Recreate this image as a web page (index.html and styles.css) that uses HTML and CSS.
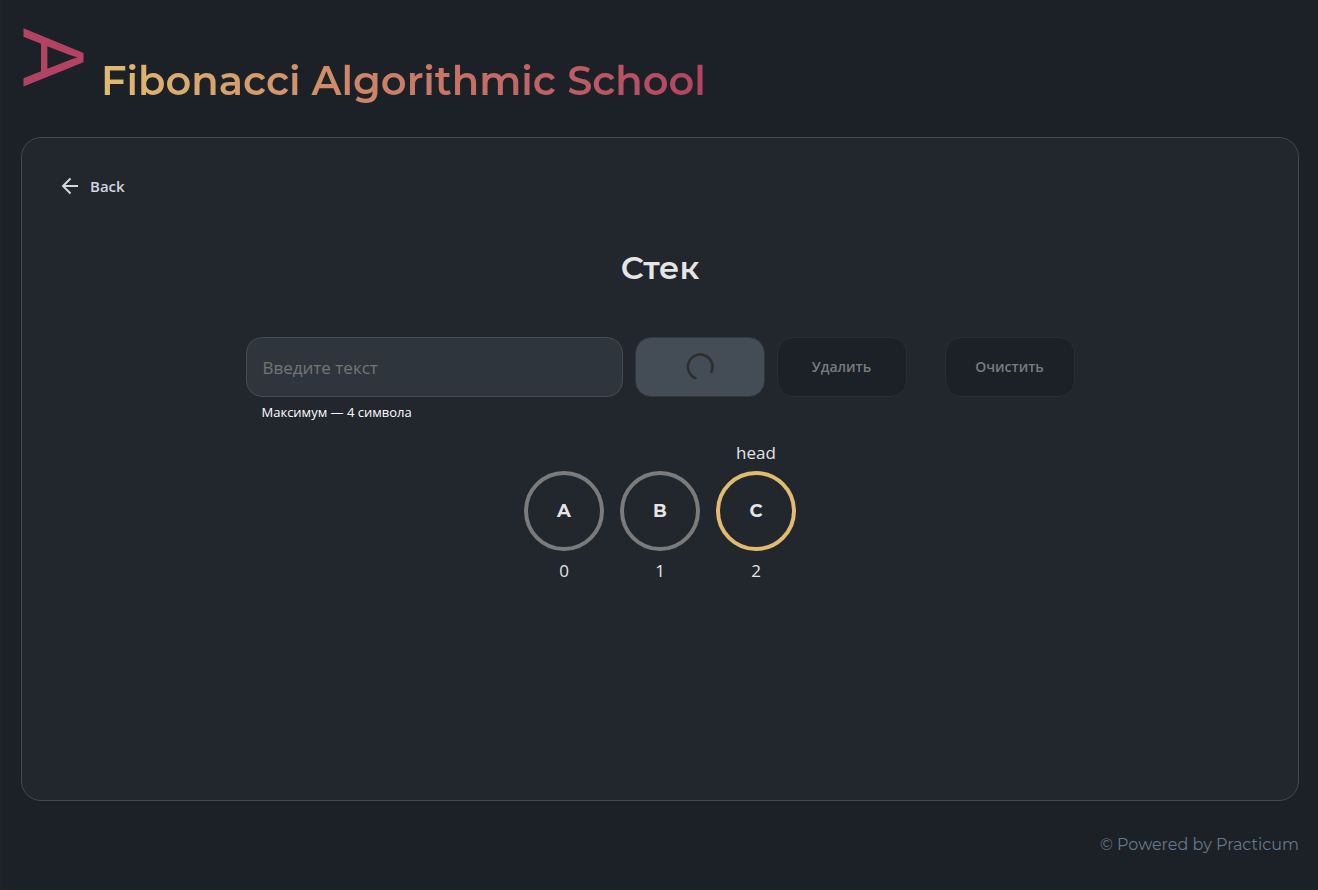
FILE: index.html
```html
<!DOCTYPE html>
<html lang="ru">
<head>
<meta charset="utf-8">
<meta name="viewport" content="width=device-width, initial-scale=1">
<title>Стек</title>
<link rel="stylesheet" href="styles.css">
</head>
<body class="page">
  <header class="header">
    <span class="logo" aria-hidden="true">A</span>
    <h1 class="title">Fibonacci Algorithmic School</h1>
  </header>
  <main class="card">
    <a class="back" href="#">
      <svg class="back-icon" viewBox="0 0 18 18" width="18" height="18" fill="none" stroke="currentColor" stroke-width="2" aria-hidden="true"><path d="M17 9H2M9.500 1.500L2 9l7.500 7.500"/></svg>
      <span>Back</span>
    </a>
    <h2 class="heading">Стек</h2>
    <form class="form">
      <div class="field">
        <input class="input" type="text" maxlength="4" placeholder="Введите текст" aria-label="Введите текст" aria-describedby="hint">
        <span class="hint" id="hint">Максимум — 4 символа</span>
      </div>
      <button class="button button-loading" type="button" aria-label="Добавить" disabled>
        <svg viewBox="0 0 28 28" width="28" height="28" fill="none" stroke="#2d2d2d" stroke-width="2.500" stroke-linecap="round" aria-hidden="true"><path d="M9.500 25.200A12.300 12.300 0 1 1 25.400 19"/></svg>
      </button>
      <button class="button" type="button" disabled>Удалить</button>
      <button class="button button-clear" type="button" disabled>Очистить</button>
    </form>
    <ul class="stack">
      <li class="node"><span class="head"></span><span class="circle">A</span><span class="index">0</span></li>
      <li class="node"><span class="head"></span><span class="circle">B</span><span class="index">1</span></li>
      <li class="node"><span class="head">head</span><span class="circle circle-changing">C</span><span class="index">2</span></li>
    </ul>
  </main>
  <footer class="footer">© Powered by Practicum</footer>
</body>
</html>
```
FILE: styles.css
```css
*, *::before, *::after { box-sizing: border-box; }

.page {
  display: flex;
  flex-direction: column;
  min-height: 100vh;
  margin: 0;
  padding: 0 19px 0 20px;
  border-left: 1px solid #222;
  border-bottom: 1px solid #222;
  background: #1c2027;
  color: #e5e5e5;
  font-family: "Segoe UI", "Open Sans", sans-serif;
}

.header {
  display: flex;
  align-items: flex-start;
  gap: 16px;
  height: 137px;
  padding-top: 28px;
}

.logo {
  width: 64px;
  color: #b24362;
  font: 400 88px/64px "Liberation Sans", sans-serif;
  writing-mode: vertical-rl;
  text-orientation: sideways;
}

.title {
  margin: 28px 0 0;
  background: linear-gradient(90deg, #e0bb70, #d08b69 38%, #b24362);
  background-clip: text;
  color: transparent;
  font: 600 40px/50px Montserrat, Inter, sans-serif;
}

.card {
  display: flex;
  flex: 1;
  flex-direction: column;
  align-items: center;
  padding: 36px 39px;
  border: 1px solid #444851;
  border-radius: 20px;
  background: #22262d;
}

.back {
  display: flex;
  align-items: center;
  align-self: flex-start;
  gap: 11px;
  color: #cfd8e2;
  font-size: 15px;
  font-weight: 600;
  line-height: 24px;
  text-decoration: none;
}

.back-icon { display: block; }

.heading {
  margin: 50px 0 0;
  font: 600 32px/40px Montserrat, Inter, sans-serif;
}

.form {
  display: flex;
  align-items: flex-start;
  gap: 12px;
  margin: 49px 0 0;
}

.field {
  display: flex;
  flex-direction: column;
  gap: 6px;
  width: 377px;
}

.input {
  width: 100%;
  height: 60px;
  padding: 0 16px;
  border: 1px solid #444c56;
  border-radius: 16px;
  background: #2f353d;
  color: #e5e5e5;
  font: 400 17px/24px "Segoe UI", "Open Sans", sans-serif;
}

.input::placeholder { color: #757575; opacity: 1; }

.hint {
  padding-left: 16px;
  color: #fff;
  font-size: 13px;
  line-height: 18px;
}

.button {
  display: flex;
  align-items: center;
  justify-content: center;
  width: 130px;
  height: 60px;
  padding: 0;
  border: 1px solid #292d37;
  border-radius: 16px;
  background: #1c2027;
  color: #7b7b7b;
  font: 600 14px/24px "Segoe UI", "Open Sans", sans-serif;
}

.button-loading {
  border-color: #2f3740;
  background: #444c56;
}

.button-clear { margin-left: 26px; }

.stack {
  display: flex;
  gap: 16px;
  margin: 20px 0 0;
  padding: 0;
  list-style: none;
}

.node {
  display: flex;
  flex-direction: column;
  align-items: center;
  width: 80px;
  font-size: 17px;
  line-height: 24px;
}

.head { height: 30px; }

.circle {
  display: flex;
  align-items: center;
  justify-content: center;
  width: 80px;
  height: 80px;
  margin-bottom: 8px;
  border: 4px solid #7b7b7b;
  border-radius: 50%;
  font: 700 18px/24px Montserrat, Inter, sans-serif;
}

.circle-changing { border-color: #e0bb70; }

.footer {
  height: 88px;
  padding-top: 32px;
  color: #64798a;
  font: 400 16px/24px Montserrat, Inter, sans-serif;
  text-align: right;
}
```
